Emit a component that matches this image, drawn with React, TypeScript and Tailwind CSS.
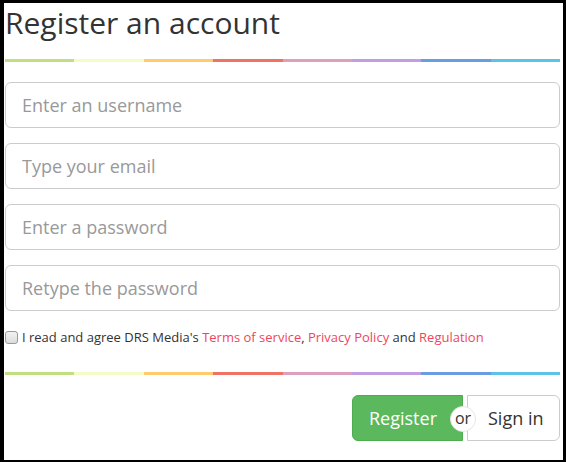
import React from "react";

const stripeColors = [
  "bg-[#c1de81]",
  "bg-[#f5fbc6]",
  "bg-[#fecb6e]",
  "bg-[#ee7365]",
  "bg-[#dc9fbe]",
  "bg-[#c39de1]",
  "bg-[#699de3]",
  "bg-[#5dc3e4]",
];

function Stripe({ className = "" }: { className?: string }) {
  return (
    <div className={`flex h-[3px] w-full ${className}`}>
      {stripeColors.map((c) => (
        <div key={c} className={`flex-1 ${c}`} />
      ))}
    </div>
  );
}

function Field({ placeholder, type = "text" }: { placeholder: string; type?: string }) {
  return (
    <input
      type={type}
      placeholder={placeholder}
      className="block h-[46px] w-full rounded-[6px] border border-[#cccccc] bg-white px-[16px] text-[18px] text-[#555] placeholder:text-[#999999] outline-none"
    />
  );
}

export default function App() {
  return (
    <div
      className="h-[462px] w-[566px] bg-black pt-[3px] pl-[4px] pr-[3px] pb-[2px]"
      style={{ fontFamily: '"Open Sans", "Liberation Sans", sans-serif' }}
    >
      <div className="flex h-full w-full flex-col bg-white pl-[1px] pr-[3px]">
        <h3 className="mt-[3px] text-[30px] leading-[33px] font-normal text-[#333333]">
          Register an account
        </h3>
        <Stripe className="mt-[20px]" />
        <div className="mt-[20px] flex flex-col gap-[15px]">
          <Field placeholder="Enter an username" />
          <Field placeholder="Type your email" type="email" />
          <Field placeholder="Enter a password" type="password" />
          <Field placeholder="Retype the password" type="password" />
        </div>
        <label className="mt-[16px] flex h-[20px] items-center text-[13px] leading-[20px] text-[#333333]">
          <input
            type="checkbox"
            className="m-0 h-[13px] w-[13px] appearance-none rounded-[3px] border border-[#9a9a9a] bg-gradient-to-b from-[#f2f2f2] to-[#dcdcdc]"
          />
          <span className="ml-[4px]">
            I read and agree DRS Media's{" "}
            <a className="text-[#f2455c]">Terms of service</a>,{" "}
            <a className="text-[#f2455c]">Privacy Policy</a> and{" "}
            <a className="text-[#f2455c]">Regulation</a>
          </span>
        </label>
        <Stripe className="mt-[25px]" />
        <div className="mt-[20px] flex justify-end">
          <div className="relative flex">
            <button className="h-[46px] w-[111px] rounded-l-[6px] border border-[#4cae4c] bg-[#5cb85c] pl-[16px] text-left text-[18px] text-white">
              Register
            </button>
            <button className="ml-[4px] h-[46px] w-[93px] rounded-r-[6px] border border-[#cccccc] bg-white pl-[20px] text-left text-[18px] text-[#333333]">
              Sign in
            </button>
            <div className="absolute left-[98px] top-[11px] flex h-[26px] w-[26px] items-center justify-center rounded-full border border-[#e6e6e6] bg-white text-[16px] leading-none text-[#333333]">
              <span className="-mt-[2px]">or</span>
            </div>
          </div>
        </div>
      </div>
    </div>
  );
}
